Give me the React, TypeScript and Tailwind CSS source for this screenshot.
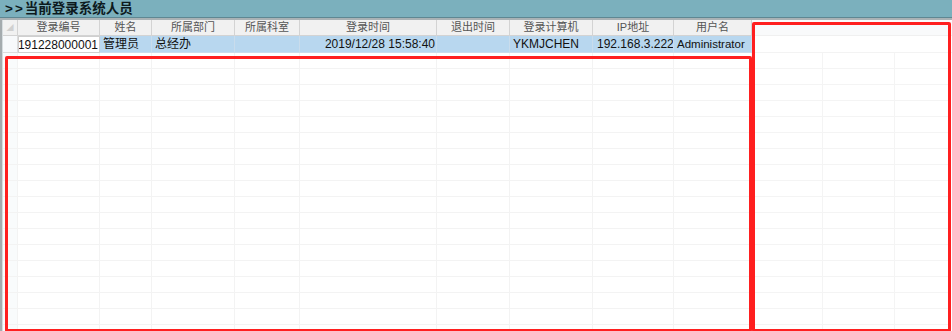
import React from "react";

const cols = [
  { w: 15, label: "" },
  { w: 82, label: "登录编号" },
  { w: 52, label: "姓名" },
  { w: 83, label: "所属部门" },
  { w: 65, label: "所属科室" },
  { w: 137, label: "登录时间" },
  { w: 73, label: "退出时间" },
  { w: 83, label: "登录计算机" },
  { w: 81, label: "IP地址" },
  { w: 78, label: "用户名" },
];

const emptyCols = [71, 72, 56];

const blue = "shrink-0 bg-[#b8d7ef] border-r border-b border-[#c9dcec] flex items-center overflow-hidden whitespace-nowrap";

export default function App() {
  const rows = Array.from({ length: 18 });
  return (
    <div
      className="relative w-[952px] h-[331px] overflow-hidden bg-white"
      style={{ fontFamily: '"Liberation Sans", "Noto Sans CJK SC", sans-serif' }}
    >
      <div className="h-[17px] bg-[#7bb0bd] flex items-center pl-[5px] overflow-hidden">
        <span className="text-[13.5px] font-bold text-[#0d1a1e] leading-[17px]">
          <span className="tracking-[2px]">&gt;&gt;</span>当前登录系统人员
        </span>
      </div>
      <div className="h-[1px] bg-[#5e8792]" />
      <div className="h-[2px] bg-[#a9b2b5]" />
      <div className="flex h-[311px]">
        <div className="w-[3px] bg-[#a4abae] border-r border-[#d6dcdf]" />
        <div className="flex-1 flex flex-col">
          {/* header */}
          <div className="flex h-[16px] shrink-0">
            {cols.map((c, i) => (
              <div
                key={i}
                className="shrink-0 h-[16px] bg-[#f1f1f1] border-r border-b border-[#d3d3d3] flex items-center justify-center text-[11px] text-[#555] leading-[15px] overflow-hidden whitespace-nowrap"
                style={{ width: c.w }}
              >
                {i === 0 ? <span className="text-[7px] leading-[7px] text-[#d0d0d0]">◢</span> : c.label}
              </div>
            ))}
            <div className="flex-1 bg-[#f9fafb] border-b border-[#f0f0f0]" />
          </div>
          {/* data row */}
          <div className="flex h-[17px] shrink-0 text-[12px] leading-[16px] text-[#111]">
            <div className="shrink-0 w-[15px] bg-[#f7f9fb] border-r border-b border-[#dcdcdc]" />
            <div className="shrink-0 w-[82px] bg-white border border-[#cfcfcf] flex items-center justify-end pr-[1px] overflow-hidden whitespace-nowrap">
              191228000001
            </div>
            <div className={`${blue} w-[52px] pl-[3px]`}>管理员</div>
            <div className={`${blue} w-[83px] pl-[3px]`}>总经办</div>
            <div className={`${blue} w-[65px]`} />
            <div className={`${blue} w-[137px] justify-end pr-[1px]`}>2019/12/28 15:58:40</div>
            <div className={`${blue} w-[73px]`} />
            <div className={`${blue} w-[83px] pl-[3px]`}>YKMJCHEN</div>
            <div className={`${blue} w-[81px] pl-[4px]`}>192.168.3.222</div>
            <div className={`${blue} w-[78px] pl-[3px] text-[11.5px]`}>Administrator</div>
            <div className="flex-1 border-b border-[#f3f3f3]" />
          </div>
          {/* empty faint grid */}
          {rows.map((_, r) => (
            <div key={r} className="flex h-[16px] shrink-0">
              {cols.map((c, i) => (
                <div
                  key={i}
                  className={`shrink-0 border-r border-b border-[#f3f3f3] ${i === 0 ? "bg-[#f9fbfc]" : ""}`}
                  style={{ width: c.w }}
                />
              ))}
              {emptyCols.map((w, i) => (
                <div
                  key={"e" + i}
                  className="shrink-0 border-r border-b border-[#f4f4f4]"
                  style={{ width: w }}
                />
              ))}
            </div>
          ))}
        </div>
      </div>
      {/* annotation overlays */}
      <div className="absolute left-[5px] top-[56px] w-[747px] h-[276px] border-[3px] border-[#ff1f1f] rounded-[2px]" />
      <div className="absolute left-[752px] top-[22px] w-[199px] h-[310px] border-[3px] border-[#ff1f1f] rounded-[2px]" />
    </div>
  );
}
